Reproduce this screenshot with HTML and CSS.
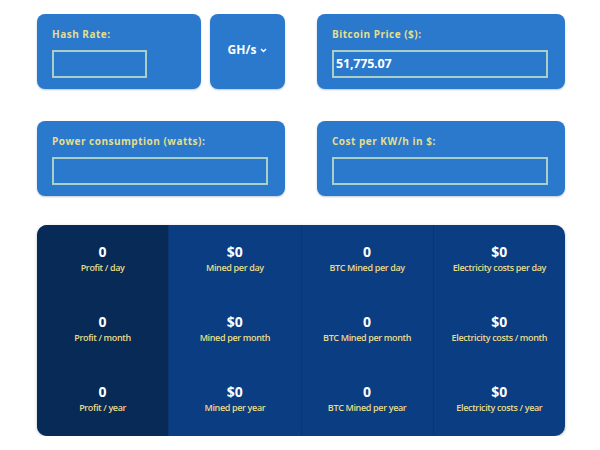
FILE: index.html
```html
<!DOCTYPE html>
<html>
<head>
<meta charset="utf-8">
<link rel="stylesheet" href="styles.css">
</head>
<body>
<div class="page">
  <div class="row">
    <div class="half split">
      <div class="box hash">
        <div class="label">Hash Rate:</div>
        <div class="input"></div>
      </div>
      <div class="box unit">GH/s <svg class="chev" width="7" height="5" viewBox="0 0 7 5"><path d="M1 1 L3.5 3.5 L6 1" fill="none" stroke="#fff" stroke-width="1.4"/></svg></div>
    </div>
    <div class="half box">
      <div class="label">Bitcoin Price ($):</div>
      <div class="input">51,775.07</div>
    </div>
  </div>
  <div class="row">
    <div class="half box">
      <div class="label">Power consumption (watts):</div>
      <div class="input"></div>
    </div>
    <div class="half box">
      <div class="label">Cost per KW/h in $:</div>
      <div class="input"></div>
    </div>
  </div>
  <div class="results">
    <div class="col first">
      <div class="cell"><div class="val">0</div><div class="cap">Profit / day</div></div>
      <div class="cell"><div class="val">0</div><div class="cap">Profit / month</div></div>
      <div class="cell"><div class="val">0</div><div class="cap">Profit / year</div></div>
    </div>
    <div class="col">
      <div class="cell"><div class="val">$0</div><div class="cap">Mined per day</div></div>
      <div class="cell"><div class="val">$0</div><div class="cap">Mined per month</div></div>
      <div class="cell"><div class="val">$0</div><div class="cap">Mined per year</div></div>
    </div>
    <div class="col">
      <div class="cell"><div class="val">0</div><div class="cap">BTC Mined per day</div></div>
      <div class="cell"><div class="val">0</div><div class="cap">BTC Mined per month</div></div>
      <div class="cell"><div class="val">0</div><div class="cap">BTC Mined per year</div></div>
    </div>
    <div class="col">
      <div class="cell"><div class="val">$0</div><div class="cap">Electricity costs per day</div></div>
      <div class="cell"><div class="val">$0</div><div class="cap">Electricity costs / month</div></div>
      <div class="cell"><div class="val">$0</div><div class="cap">Electricity costs / year</div></div>
    </div>
  </div>
</div>
</body>
</html>
```
FILE: styles.css
```css
html, body {
  margin: 0;
  padding: 0;
  background: #ffffff;
}
.page {
  padding: 14px 0 0 37px;
  width: 528px;
  font-family: "Open Sans", "Liberation Sans", sans-serif;
}
.row {
  display: flex;
  gap: 32px;
  margin-bottom: 32px;
}
.row + .row {
  margin-bottom: 29px;
}
.half {
  width: 248px;
  box-sizing: border-box;
}
.split {
  display: flex;
  gap: 9px;
}
.box {
  background: #2a79cd;
  border-radius: 8px;
  height: 75px;
  box-sizing: border-box;
  padding: 14px 15px 0 15px;
  box-shadow: 0 1px 2px rgba(0, 40, 90, 0.25);
}
.hash {
  width: 164px;
}
.unit {
  width: 75px;
  padding: 0 0 4px 0;
  display: flex;
  align-items: center;
  justify-content: center;
  gap: 4px;
  color: #ffffff;
  font-weight: 700;
  font-size: 12px;
}
.chev {
  display: block;
  margin-top: 1px;
}
.label {
  color: #e5de8c;
  font-weight: 700;
  font-size: 10px;
  height: 12px;
  line-height: 12px;
  letter-spacing: 0.5px;
}
.input {
  margin-top: 10px;
  height: 28px;
  box-sizing: border-box;
  border: 2px solid #aacfc6;
  color: #ffffff;
  font-weight: 700;
  font-size: 12.5px;
  line-height: 24px;
  padding-left: 2px;
  letter-spacing: -0.2px;
}
.hash .input {
  width: 95px;
}
.half.box .input {
  width: 216px;
}
.results {
  display: flex;
  height: 211px;
  border-radius: 10px;
  overflow: hidden;
  background: #0b3d83;
  box-shadow: 0 1px 3px rgba(0, 30, 70, 0.3);
}
.col {
  flex: 1;
  display: flex;
  flex-direction: column;
  border-left: 1px solid #0a376f;
}
.col.first {
  background: #082a56;
  border-left: none;
}
.cell {
  flex: 1;
  display: flex;
  flex-direction: column;
  align-items: center;
  justify-content: center;
  padding-bottom: 4px;
}
.val {
  color: #ffffff;
  font-weight: 700;
  font-size: 14px;
  line-height: 16px;
}
.cap {
  color: #e8dc8a;
  font-size: 9px;
  line-height: 11px;
  font-weight: 600;
  letter-spacing: -0.35px;
  margin-top: 2px;
}
```
